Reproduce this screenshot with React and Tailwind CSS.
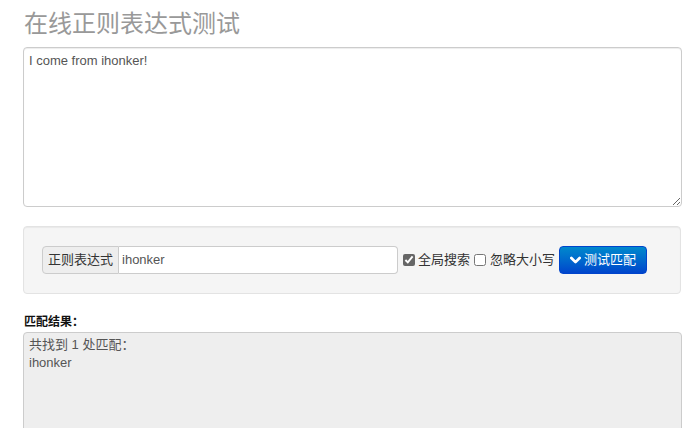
import React, { useState } from 'react';

const cjk = { fontFamily: '"Liberation Sans", "Noto Sans CJK SC", sans-serif' };

const App = () => {
  const [text, setText] = useState('I come from ihonker!');
  const [pattern, setPattern] = useState('ihonker');
  const [globalSearch, setGlobalSearch] = useState(true);
  const [ignoreCase, setIgnoreCase] = useState(false);

  return (
    <div className="bg-white w-[699px] h-[428px] overflow-hidden" style={cjk}>
      <div className="ml-[23px] w-[659px]">
        <h1 className="pt-[8px] pl-[1px] text-[24px] leading-[32px] text-[#999] font-normal">在线正则表达式测试</h1>

        <textarea
          value={text}
          onChange={(e) => setText(e.target.value)}
          className="mt-[7px] block w-[659px] h-[160px] border border-[#ccc] rounded-[4px] px-[5px] py-[3px] text-[13px] leading-[20px] text-[#555] outline-none shadow-[inset_0_1px_1px_rgba(0,0,0,0.075)]"
        />

        {/* search bar */}
        <div className="mt-[19px] w-[658px] h-[68px] bg-[#f5f5f5] border border-[#e3e3e3] rounded-[4px] shadow-[inset_0_1px_1px_rgba(0,0,0,0.05)] px-[18px] py-[19px] flex items-center">
          <div className="flex h-[28px]">
            <span className="flex items-center px-[5px] bg-[#eee] border border-[#ccc] rounded-l-[4px] text-[13px] text-[#333]">正则表达式</span>
            <input
              value={pattern}
              onChange={(e) => setPattern(e.target.value)}
              className="w-[279px] border border-l-0 border-[#ccc] rounded-r-[4px] bg-white px-[3px] text-[13px] text-[#555] outline-none"
            />
          </div>
          <label className="ml-[5px] flex items-center text-[13px] text-[#333]">
            <input
              type="checkbox"
              checked={globalSearch}
              onChange={() => setGlobalSearch(!globalSearch)}
              className="w-[12px] h-[12px] m-0 mr-[3px] accent-[#666]"
            />
            全局搜索
          </label>
          <label className="ml-[4px] flex items-center text-[13px] text-[#333]">
            <input
              type="checkbox"
              checked={ignoreCase}
              onChange={() => setIgnoreCase(!ignoreCase)}
              className="w-[12px] h-[12px] m-0 mr-[4px]"
            />
            忽略大小写
          </label>
          <button className="ml-[4px] h-[28px] w-[88px] flex items-center justify-center gap-[3px] rounded-[4px] border border-[#0044cc] bg-gradient-to-b from-[#0088cc] to-[#0044cc] text-white text-[13px]">
            <svg width="11" height="9" viewBox="0 0 12 9">
              <path d="M1.5 1.8 L6 6.3 L10.5 1.8" fill="none" stroke="white" strokeWidth="3" strokeLinecap="round" strokeLinejoin="round" />
            </svg>
            测试匹配
          </button>
        </div>

        <div className="mt-[20px] pl-[1px] text-[12px] leading-[16px] text-[#111] font-semibold">匹配结果：</div>
        <div className="mt-[2px] w-[659px] h-[120px] bg-[#eee] border border-[#ccc] rounded-t-[4px] px-[5px] py-[3px] text-[13px] leading-[18px] text-[#555]">
          <div>共找到 1 处匹配：</div>
          <div>ihonker</div>
        </div>
      </div>
    </div>
  );
};

export default App;
